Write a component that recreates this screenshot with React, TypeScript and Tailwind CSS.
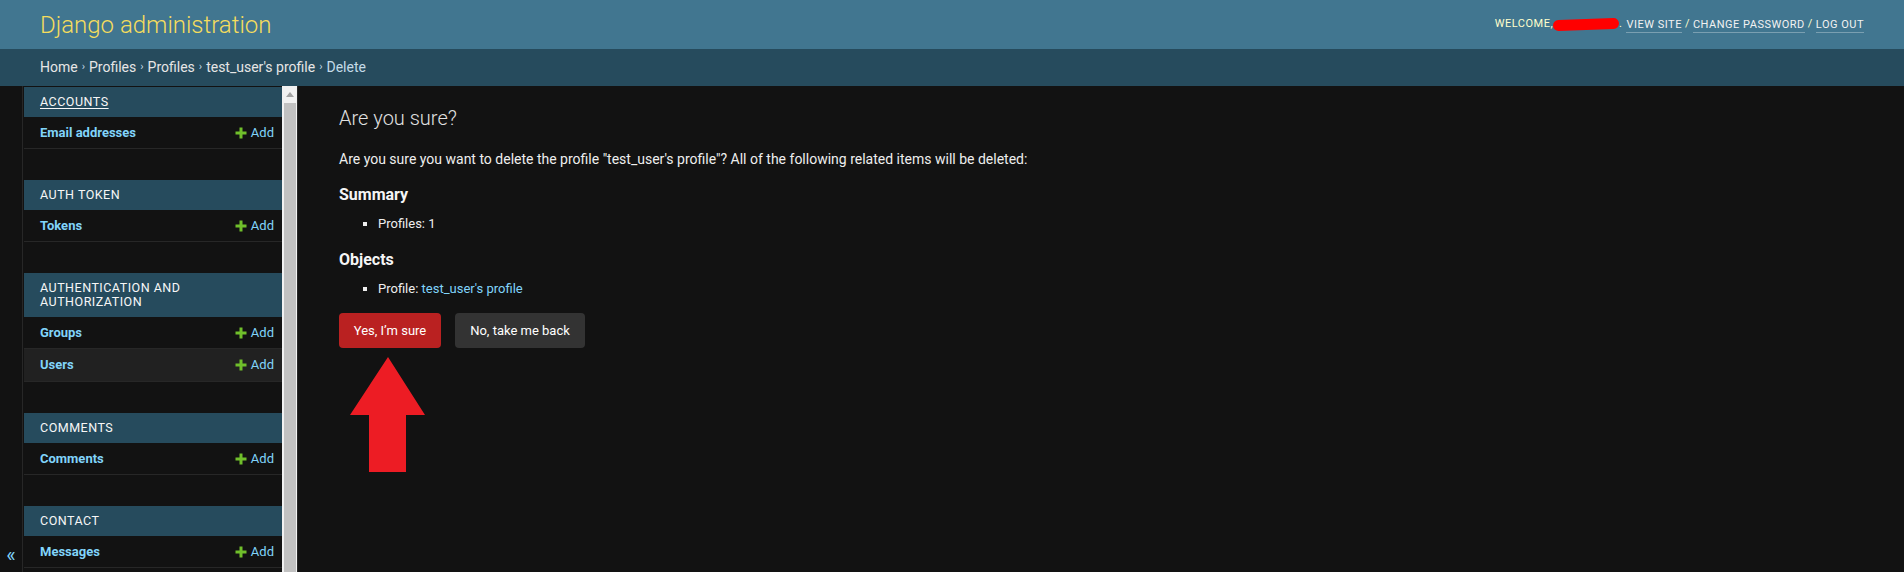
import React from "react";

const font = "font-['Roboto','Noto_Sans','Liberation_Sans',sans-serif]";

function AddLink() {
  return (
    <a className="flex items-center gap-[4px] text-[13px] leading-[16px] font-normal text-[#81d4fa]">
      <svg width="12" height="12" viewBox="0 0 12 12" className="shrink-0">
        <rect x="4.5" y="0.5" width="3" height="11" fill="#70bf2b" />
        <rect x="0.5" y="4.5" width="11" height="3" fill="#70bf2b" />
      </svg>
      <span>Add</span>
    </a>
  );
}

type Model = { name: string; current?: boolean };
type AppModule = { title: string; models: Model[]; underline?: boolean };

const modules: AppModule[] = [
  { title: "Accounts", models: [{ name: "Email addresses" }], underline: true },
  { title: "Auth Token", models: [{ name: "Tokens" }] },
  {
    title: "Authentication and Authorization",
    models: [{ name: "Groups" }, { name: "Users", current: true }],
  },
  { title: "Comments", models: [{ name: "Comments" }] },
  { title: "Contact", models: [{ name: "Messages" }] },
];

function Module({ m }: { m: AppModule }) {
  return (
    <div className="mb-[31px]">
      <div className="bg-[#264b5d] pl-[16px] pr-[8px] py-[8px] text-[12.5px] leading-[14px] tracking-[0.5px] uppercase text-[#f7f7f7]">
        <span className={m.underline ? "underline underline-offset-[2px]" : ""}>{m.title}</span>
      </div>
      {m.models.map((md) => (
        <div
          key={md.name}
          className={`flex items-center justify-between border-b border-[#272727] pl-[16px] pr-[8px] ${
            md.current ? "h-[33px] bg-[#212121]" : "h-[32px]"
          }`}
        >
          <a className="text-[13px] leading-[16px] font-bold text-[#81d4fa]">{md.name}</a>
          <AddLink />
        </div>
      ))}
    </div>
  );
}

export default function App() {
  return (
    <div className={`w-[1904px] h-[572px] overflow-hidden bg-[#121212] ${font}`}>
      {/* Header */}
      <div className="h-[49px] bg-[#417690] flex items-center justify-between px-[40px]">
        <div className="text-[24px] font-light text-[#f5dd5d] leading-[28px]">Django administration</div>
        <div className="text-[11px] tracking-[0.5px] uppercase text-[#ffc] flex items-center">
          <span>Welcome,</span>
          <span className="inline-block w-[66px] h-[11px] bg-[#ff0000] rounded-full -rotate-2" />
          <span className="mr-[4px]">.</span>
          <a className="text-[#f2f2f2] border-b border-[rgba(255,255,255,0.3)] leading-[15px]">View site</a>
          <span className="mx-[3px]">/</span>
          <a className="text-[#f2f2f2] border-b border-[rgba(255,255,255,0.3)] leading-[15px]">Change password</a>
          <span className="mx-[3px]">/</span>
          <a className="text-[#f2f2f2] border-b border-[rgba(255,255,255,0.3)] leading-[15px]">Log out</a>
        </div>
      </div>
      {/* Breadcrumbs */}
      <div className="h-[37px] bg-[#264b5d] flex items-center px-[40px] text-[14px] text-[#c4dce8]">
        <a className="text-[#e6e6e6]">Home</a>
        <span className="mx-[4px] text-[11px]">›</span>
        <a className="text-[#e6e6e6]">Profiles</a>
        <span className="mx-[4px] text-[11px]">›</span>
        <a className="text-[#e6e6e6]">Profiles</a>
        <span className="mx-[4px] text-[11px]">›</span>
        <a className="text-[#e6e6e6]">test_user's profile</a>
        <span className="mx-[4px] text-[11px]">›</span>
        <span>Delete</span>
      </div>
      {/* Main */}
      <div className="flex h-[486px]">
        {/* toggle */}
        <div className="w-[23px] shrink-0 border-r border-[#272727] flex flex-col justify-end items-center pb-[5px]">
          <span className="text-[20px] leading-[24px] text-[#81d4fa]">«</span>
        </div>
        {/* sidebar */}
        <div className="w-[275px] shrink-0 flex border-r border-[#272727]">
          <div className="w-[259px] overflow-hidden pt-[1px] pl-[1px]">
            {modules.map((m) => (
              <Module key={m.title} m={m} />
            ))}
          </div>
          <div className="w-[15px] bg-[#f1f1f1] flex flex-col items-center">
            <div className="h-[17px] w-full flex items-center justify-center">
              <svg width="8" height="5" viewBox="0 0 8 5">
                <polygon points="4,0 8,5 0,5" fill="#a3a3a3" />
              </svg>
            </div>
            <div className="flex-1 w-[12px] bg-[#c1c1c1]" />
          </div>
        </div>
        {/* content */}
        <div className="relative flex-1 pl-[41px] pr-[40px] pt-[20px] text-[#eeeeee]">
          <h1 className="text-[20px] leading-[24px] font-light text-[#e0e0e0]">Are you sure?</h1>
          <p className="mt-[20px] text-[14px] leading-[18px]">
            Are you sure you want to delete the profile "test_user's profile"? All of the following related items will be deleted:
          </p>
          <h2 className="mt-[17px] text-[16px] leading-[20px] font-bold text-[#f5f5f5]">Summary</h2>
          <ul className="mt-[10px] pl-[39px] list-[square] text-[13px] leading-[18px]">
            <li>Profiles: 1</li>
          </ul>
          <h2 className="mt-[17px] text-[16px] leading-[20px] font-bold text-[#f5f5f5]">Objects</h2>
          <ul className="mt-[10px] pl-[39px] list-[square] text-[13px] leading-[18px]">
            <li>
              Profile: <a className="text-[#81d4fa]">test_user's profile</a>
            </li>
          </ul>
          <div className="mt-[15px] flex items-center">
            <button className="w-[102px] h-[35px] rounded-[4px] bg-[#ba2121] text-white text-[13px]">
              Yes, I’m sure
            </button>
            <a className="ml-[14px] w-[130px] h-[35px] rounded-[4px] bg-[#333333] text-white text-[13px] flex items-center justify-center">
              No, take me back
            </a>
          </div>
          {/* annotation arrow */}
          <svg
            width="75"
            height="115"
            viewBox="0 0 75 115"
            className="absolute left-[52px] top-[271px]"
          >
            <polygon points="38,0 75,58 56,58 56,115 19,115 19,58 0,58" fill="#ed1c24" />
          </svg>
        </div>
      </div>
    </div>
  );
}
